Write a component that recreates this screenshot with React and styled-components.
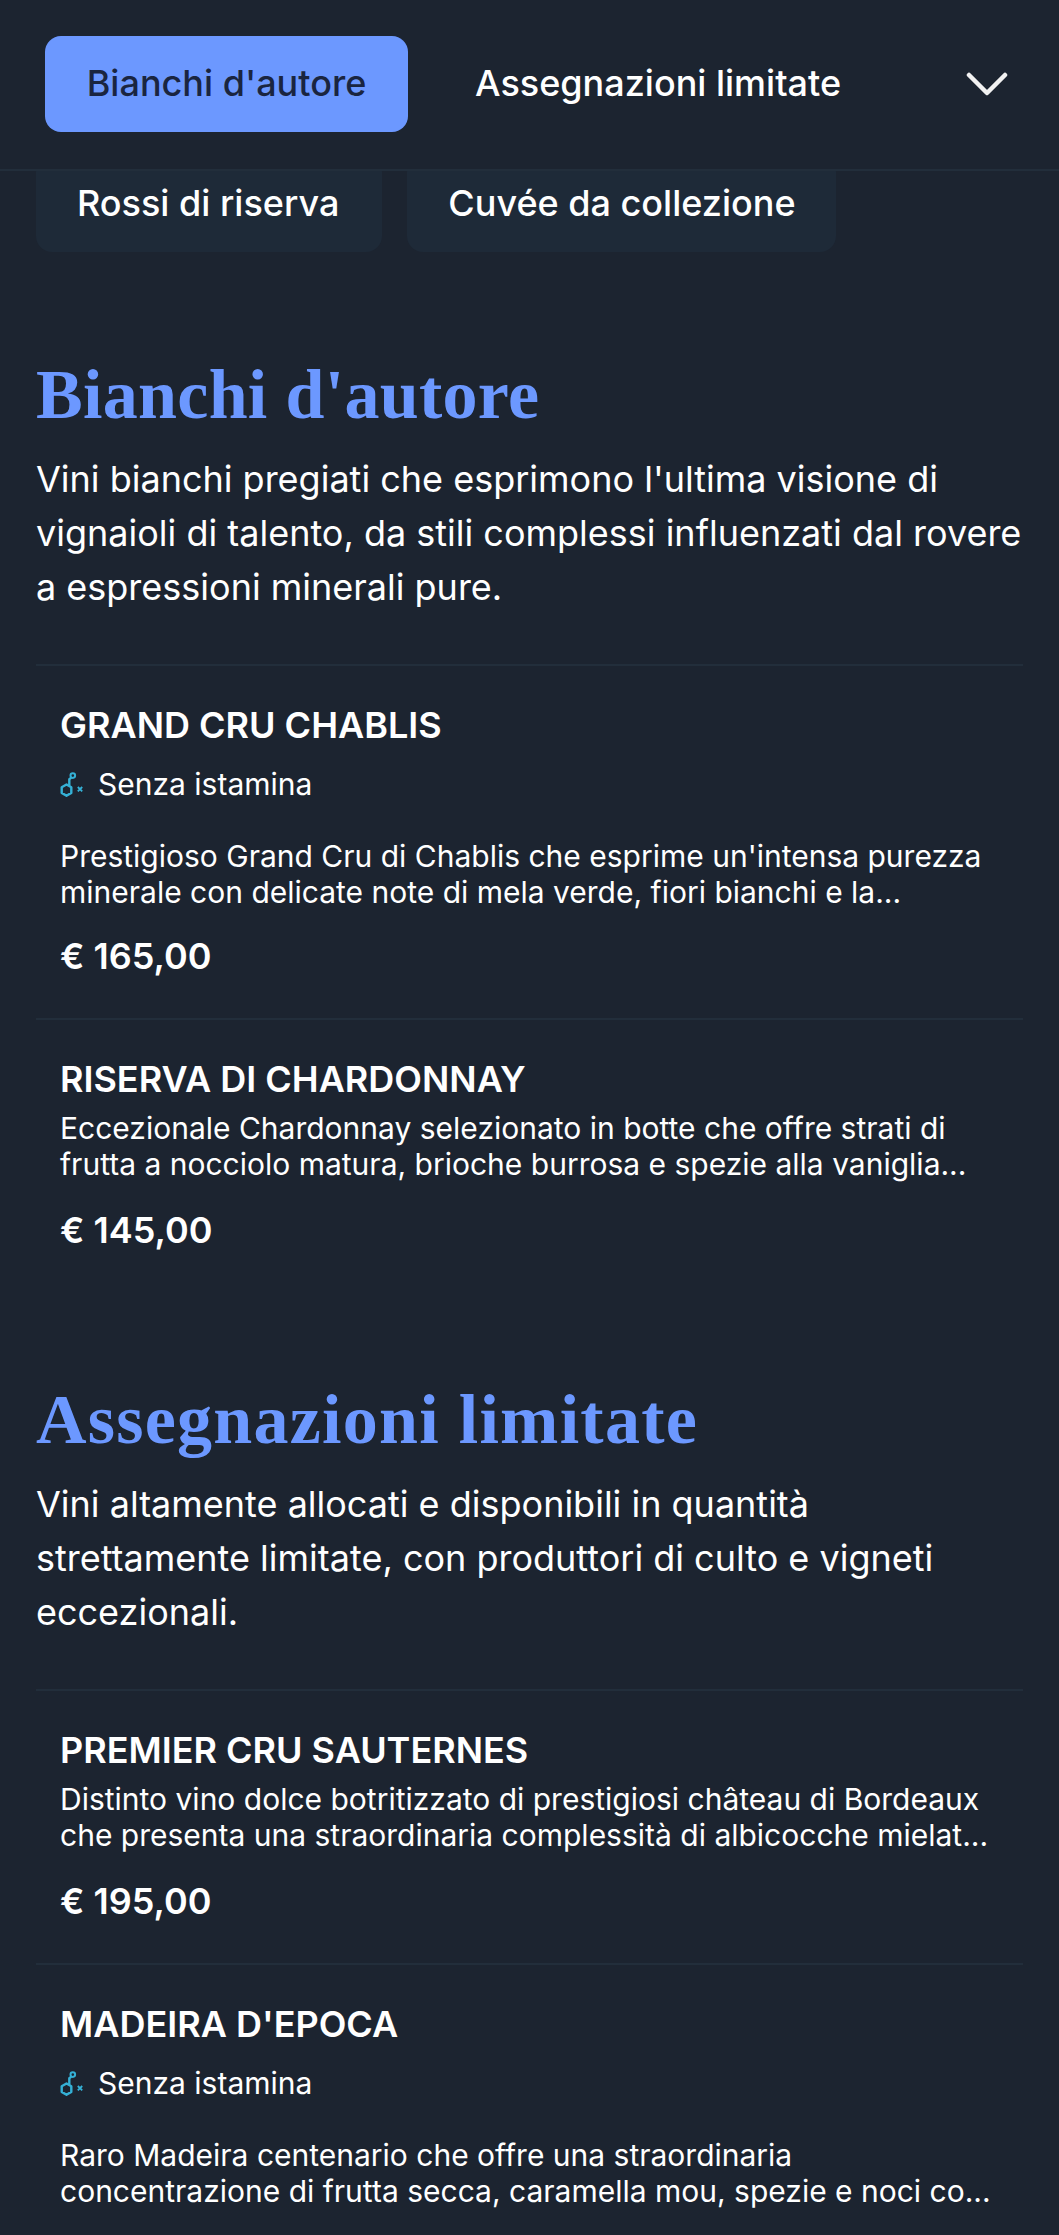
import React from 'react';
import styled, { createGlobalStyle } from 'styled-components';

const Global = createGlobalStyle`
  html, body { margin: 0; padding: 0; background: #1c2430; }
  * { box-sizing: border-box; }
  body { font-family: Inter, "Liberation Sans", sans-serif; color: #fff; overflow: hidden; }
`;
const Page = styled.div`
  width: 1059px; height: 2235px; overflow: hidden; background: #1c2430;
`;
const Header = styled.header`
  position: relative; z-index: 2;
  height: 171px; background: #1c2430; border-bottom: 2px solid #222e3b;
  display: flex; align-items: flex-start; padding: 36px 51px 0 45px;
`;
const Tab = styled.div`
  height: 96px; display: flex; align-items: center; justify-content: center;
  padding: 0 0 3px;
  width: ${p => (p.$active ? '363px' : 'auto')};
  margin: 0 ${p => (p.$active ? 67 : 0)}px 0 0;
  border-radius: 16px;
  background: ${p => (p.$active ? '#6c98ff' : 'transparent')};
  color: ${p => (p.$active ? '#1a2540' : '#fff')};
  font-size: 36px; font-weight: 500; white-space: nowrap;
`;
const ChevronBtn = styled.svg`
  margin-left: auto; margin-top: 36px; width: 42px; height: 24px; flex: none;
`;
const ChipRow = styled.div`
  display: flex; gap: 25px; padding: 0 36px; margin-top: -15px;
`;
const Chip = styled.div`
  height: 96px; display: flex; align-items: center; border-radius: 16px;
  padding: 0 ${p => p.$right}px 3px 41px;
  background: #1e2a38; color: #fff; font-size: 36px; font-weight: 500; white-space: nowrap;
`;
const Section = styled.section`
  padding: 0 36px; margin-top: ${p => p.$top}px;
`;
const Title = styled.h2`
  margin: 0; font-family: "Liberation Serif", serif; font-weight: 700;
  font-size: 70px; line-height: 70px; color: #6c98ff; letter-spacing: ${p => p.$spacing}px;
`;
const Intro = styled.p`
  margin: 22px 0 50px; font-size: 36px; line-height: 54px; font-weight: 400; color: #fff;
`;
const Item = styled.article`
  border-top: 2px solid #222e3b; padding: 37px 24px 40px;
`;
const Name = styled.h3`
  margin: 0; font-size: 36px; line-height: 44px; font-weight: 600; color: #fff;
`;
const Badge = styled.div`
  display: flex; align-items: center; gap: 14px; height: 40px; margin: 17px 0 34px;
  font-size: 30px; color: #fff;
`;
const Desc = styled.p`
  margin: ${p => (p.$afterBadge ? 0 : 9)}px 0 ${p => (p.$afterBadge ? 24 : 26)}px;
  font-size: 30px; line-height: 36px; color: #fff;
`;
const Price = styled.div`
  font-size: 36px; line-height: 44px; font-weight: 600; color: #fff;
`;
const HistamineIcon = styled.svg`
  flex: none; width: 24px; height: 28px;
`;

const Histamine = () => (
  <HistamineIcon viewBox="0 0 24 28" fill="none" stroke="#35b1d6" strokeWidth="2.400" strokeLinejoin="round">
    <path d="M6.500 14.500l4.800 2.800v5.600l-4.800 2.800-4.800-2.800v-5.600z" />
    <path d="M9.300 15.800V9.200l2-1.600" />
    <circle cx="12.800" cy="5.600" r="2.300" strokeWidth="2" />
    <path d="M17.800 17l4.400 4.400M22.200 17l-4.400 4.400" strokeWidth="1.800" />
  </HistamineIcon>
);

const Wine = ({ name, histamine, lines, price }) => (
  <Item>
    <Name>{name}</Name>
    {histamine && <Badge><Histamine />Senza istamina</Badge>}
    <Desc $afterBadge={histamine}>{lines[0]}<br />{lines[1]}</Desc>
    {price && <Price>{price}</Price>}
  </Item>
);

export default function App() {
  return (
    <Page>
      <Global />
      <Header>
        <Tab $active>Bianchi d'autore</Tab>
        <Tab>Assegnazioni limitate</Tab>
        <ChevronBtn viewBox="0 0 42 24" fill="none" stroke="#f2f2f2" strokeWidth="4.500" strokeLinecap="round" strokeLinejoin="round">
          <path d="M3 3l18 18L39 3" />
        </ChevronBtn>
      </Header>
      <ChipRow>
        <Chip $right={43}>Rossi di riserva</Chip>
        <Chip $right={40}>Cuvée da collezione</Chip>
      </ChipRow>
      <Section $top={108}>
        <Title $spacing={0.3}>Bianchi d'autore</Title>
        <Intro>Vini bianchi pregiati che esprimono l'ultima visione di<br />vignaioli di talento, da stili complessi influenzati dal rovere<br />a espressioni minerali pure.</Intro>
        <Wine name="GRAND CRU CHABLIS" histamine lines={["Prestigioso Grand Cru di Chablis che esprime un'intensa purezza", "minerale con delicate note di mela verde, fiori bianchi e la..."]} price="€ 165,00" />
        <Wine name="RISERVA DI CHARDONNAY" lines={["Eccezionale Chardonnay selezionato in botte che offre strati di", "frutta a nocciolo matura, brioche burrosa e spezie alla vaniglia..."]} price="€ 145,00" />
      </Section>
      <Section $top={93}>
        <Title $spacing={1.25}>Assegnazioni limitate</Title>
        <Intro>Vini altamente allocati e disponibili in quantità<br />strettamente limitate, con produttori di culto e vigneti<br />eccezionali.</Intro>
        <Wine name="PREMIER CRU SAUTERNES" lines={["Distinto vino dolce botritizzato di prestigiosi château di Bordeaux", "che presenta una straordinaria complessità di albicocche mielat..."]} price="€ 195,00" />
        <Wine name="MADEIRA D'EPOCA" histamine lines={["Raro Madeira centenario che offre una straordinaria", "concentrazione di frutta secca, caramella mou, spezie e noci co..."]} />
      </Section>
    </Page>
  );
}
